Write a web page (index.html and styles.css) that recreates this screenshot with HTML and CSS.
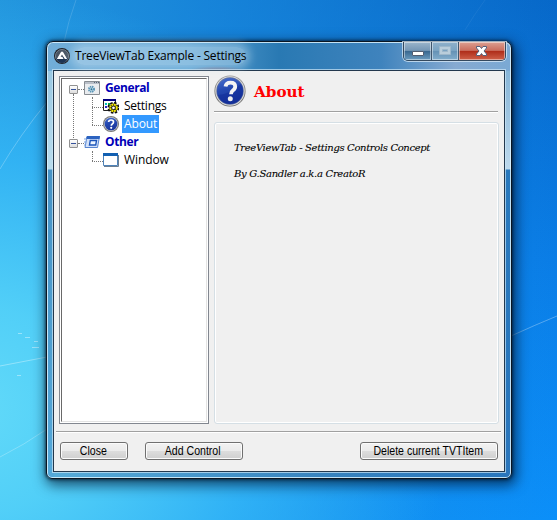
FILE: index.html
```html
<!DOCTYPE html>
<html lang="en">
<head>
<meta charset="utf-8">
<title>TreeViewTab Example - Settings</title>
<link rel="stylesheet" href="styles.css">
</head>
<body>
<svg class="rays" width="557" height="520" viewBox="0 0 557 520" fill="none" stroke="#fff">
  <path d="M76 0Q68 22 64 42" stroke-opacity=".15"/>
  <path d="M0 169Q20 135 47 102" stroke-opacity=".25"/>
  <path d="M0 366L47 357" stroke-opacity=".35"/>
  <path d="M0 457Q24 445 47 429" stroke-opacity=".25"/>
  <path d="M511 336Q535 325 557 316" stroke-opacity=".3"/>
  <path d="M465 30Q474 15 485 0" stroke-opacity=".06"/>
  <path d="M32 347.500h7M17 375.500h4M18 333.500h4M34 341.500h4M25 337.500h5" stroke-opacity=".4"/>
</svg>
<svg class="defs" width="0" height="0">
  <defs>
    <linearGradient id="blue" x1="0" y1="0" x2=".3" y2="1">
      <stop offset="0" stop-color="#4a70d0"/><stop offset=".5" stop-color="#2448b0"/><stop offset="1" stop-color="#1a379f"/>
    </linearGradient>
    <linearGradient id="ring" x1="0" y1="0" x2="0" y2="1">
      <stop offset="0" stop-color="#999"/><stop offset="1" stop-color="#666"/>
    </linearGradient>
    <symbol id="help" viewBox="0 0 32 32">
      <circle cx="16" cy="16" r="15.6" fill="url(#ring)"/>
      <circle cx="16" cy="16" r="14.7" fill="#dcdcdc"/>
      <circle cx="16" cy="16" r="13.7" fill="#60709d"/>
      <circle cx="16" cy="16" r="13" fill="url(#blue)"/>
      <path d="M4 20Q14 20 27 9A13 13 0 0 1 27 23A13 13 0 0 1 5 23Z" fill="#0b2391" opacity=".4"/>
      <path d="M11.500 11.500Q12 7.600 16.500 7.600Q21.200 7.600 21.200 11.600Q21.200 14 18.800 15.500Q17 16.800 17 19.200" fill="none" stroke="#f4f4f4" stroke-width="3.800"/>
      <circle cx="16.300" cy="23.800" r="2.500" fill="#eee"/>
    </symbol>
  </defs>
</svg>

<main class="window">
  <header class="titlebar">
    <svg class="app-icon" width="16" height="16" viewBox="0 0 16 16">
      <circle cx="8" cy="8" r="8" fill="#20242b"/>
      <circle cx="8" cy="8" r="6.600" fill="#4a5563" stroke="#8b97a3" stroke-width=".7"/>
      <path d="M2 10Q8 7 14 10Q12 15 8 15Q4 15 2 10Z" fill="#1d3351"/>
      <path d="M2.800 11L7 4.100Q8 3 9 4.100L13.200 11H10.800L8 6.400L6.600 8.800H8.300L9.600 11Z" fill="#fff"/>
    </svg>
    <span class="caption">TreeViewTab Example - Settings</span>
    <div class="controls">
      <span class="ctl min"><svg width="27" height="18" viewBox="0 0 27 18"><rect x="8.500" y="9.500" width="11" height="4" rx=".5" fill="#fff" stroke="#525d70"/></svg></span>
      <span class="ctl max"><svg width="26" height="18" viewBox="0 0 26 18"><path d="M7.500 4.500h11v8h-11zM10.500 7.500h5v2h-5z" fill="#b9cddb" fill-rule="evenodd" stroke="#9db7ca"/></svg></span>
      <span class="ctl close"><svg width="46" height="18" viewBox="0 0 46 18"><path d="M17.500 4.500h3.500l1.500 2l1.500-2h3.500v1.500l-2.500 3l2.500 3v1.500h-3.500l-1.500-2l-1.500 2h-3.500v-1.500l2.500-3l-2.500-3z" fill="#fff" stroke="#56607a"/></svg></span>
    </div>
  </header>

  <section class="client">
    <div class="panes">
      <div class="tree-frame">
        <ul class="tree">
          <li class="group first">
            <div class="row"><span class="toggle"></span><span class="stub"></span>
              <svg width="16" height="14" viewBox="0 0 16 14"><path d="M.5.5h15v13H.5z" fill="#e9ecef" stroke="#878c92"/><path d="M1 1h14v2H1z" fill="#b9bfc8"/><path d="M10 1.500h1M12 1.500h1M14 1.500h1" stroke="#56667a"/><circle cx="7.500" cy="8.200" r="2.500" fill="#c9e1ed" stroke="#5794b6" stroke-width="2" stroke-dasharray="1.300 .7"/><circle cx="7.500" cy="8.200" r="1" fill="#2d7196"/></svg>
              <span class="label general"><b>General</b></span></div>
            <ul>
              <li class="row"><span class="branch"></span>
                <svg width="16" height="16" viewBox="0 0 16 16"><path d="M.5 1.500h12v11H.5z" fill="#fff" stroke="#222"/><path d="M0 1h13v2H0z" fill="#000080"/><path d="M2 5h2v2H2z" fill="#0bb"/><path d="M2 8h2v2H2z" fill="#22c"/><path d="M5 5h2v2H5z" fill="#0a4"/><circle cx="10.500" cy="9.800" r="4.500" fill="none" stroke="#111" stroke-width="3" stroke-dasharray="2.200 1.330"/><circle cx="10.500" cy="9.800" r="2.900" fill="#fff" stroke="#111" stroke-width="3"/><circle cx="10.500" cy="9.800" r="3.300" fill="none" stroke="#f2e500" stroke-width="2" stroke-dasharray="2 .6"/></svg>
                <span class="label settings">Settings</span></li>
              <li class="row"><span class="branch"></span>
                <svg width="16" height="16" viewBox="0 0 16 16"><circle cx="8" cy="8" r="8" fill="#777"/><circle cx="8" cy="8" r="7" fill="#bfc3cc"/><circle cx="8" cy="8" r="6.300" fill="url(#blue)"/><path d="M5.600 6Q5.800 4 8.100 4Q10.500 4 10.500 6Q10.500 7.200 9.300 7.900Q8.300 8.500 8.300 9.700" fill="none" stroke="#fff" stroke-width="1.700"/><circle cx="8.200" cy="11.800" r="1.100" fill="#fff"/></svg>
                <span class="label about selected">About</span></li>
            </ul>
          </li>
          <li class="group">
            <div class="row"><span class="toggle"></span><span class="stub"></span>
              <svg width="16" height="12" viewBox="0 0 16 12"><path d="M3 .5h12.500l-2 11H1z" fill="#d3e2fa" stroke="#5784cf"/><path d="M3 0h13l-.6 3H2z" fill="#2c63c0"/><path d="M0 3h3M0 6h2M0 9h2" stroke="#78a1df"/><path d="M6.300 4.500h6.200l-.8 4.500H5.500z" fill="#eef6ff" stroke="#1c55ba" stroke-width="1.400"/></svg>
              <span class="label other"><b>Other</b></span></div>
            <ul>
              <li class="row"><span class="branch"></span>
                <svg width="16" height="14" viewBox="0 0 16 14"><path d="M1 13.500h14.500V2" fill="none" stroke="#6b7e92"/><path d="M.5 1h14v11.500H.5z" fill="#fff" stroke="#4e83b9"/><path d="M0 0h15v3H0z" fill="#1260b2"/></svg>
                <span class="label win">Window</span></li>
            </ul>
          </li>
        </ul>
      </div>
      <div class="page">
        <div class="page-head"><svg width="32" height="32"><use href="#help"/></svg><h1>About</h1></div>
        <div class="content">
          <p>TreeViewTab - Settings Controls Concept</p>
          <p class="author">By G.Sandler a.k.a CreatoR</p>
        </div>
      </div>
    </div>
    <footer class="actions">
      <button class="b-close"><span>Close</span></button>
      <button class="b-add"><span>Add Control</span></button>
      <button class="b-del"><span>Delete current TVTItem</span></button>
    </footer>
  </section>
</main>
</body>
</html>
```
FILE: styles.css
```css
* { box-sizing: border-box; }
body {
  margin: 0;
  width: 557px;
  height: 520px;
  overflow: hidden;
  padding: 41px 45px 41px 46px;
  font: 12px "Open Sans", "Noto Sans", sans-serif;
  color: #000;
  background:
    radial-gradient(ellipse 480px 420px at -30px 410px, #62daf9 0%, rgba(84,210,249,.95) 25%, rgba(55,188,250,.75) 60%, rgba(30,160,250,0) 100%),
    linear-gradient(90deg, rgba(36,152,222,.95), rgba(30,145,225,.65) 40%, rgba(10,110,220,0)),
    linear-gradient(#0768c9, #0a7de6 50%, #0b8ff9);
}
.rays { position: absolute; left: 0; top: 0; }
.defs { position: absolute; }
.window {
  position: relative;
  width: 466px;
  height: 438px;
  border: 1px solid #0b1622;
  border-radius: 7px 7px 6px 6px;
  padding: 0 6px;
  background:
    radial-gradient(ellipse 30px 5px at 170px 29px, rgba(170,60,60,.5), rgba(170,60,60,0)) 0 0 / 100% 29px no-repeat,
    linear-gradient(90deg, #72aed8 0, #5ba3d3 30%, #2979b3 50%, #3f83bd 72%, #86aad1 88%, #7aa9d4) 0 0 / 100% 29px no-repeat,
    linear-gradient(#76aad1 0, #bcd8ec 127px, #2979bd 128px, #2a75bb 100%) 100% 0 / 7px 100% no-repeat,
    linear-gradient(#8fc2e0 0, #b9dced 127px, #4793c6 128px, #54a8d9 100%) 0 0 / 7px 100% no-repeat,
    linear-gradient(90deg, #58add9, #3783bf 60%, #2876bd);
  box-shadow: inset 0 0 0 1px rgba(220,243,255,.85), 0 0 3px 1px rgba(0,15,30,.6), 2px 4px 13px 2px rgba(0,20,45,.7);
}
.titlebar { height: 28px; display: flex; align-items: flex-start; padding-left: 1px; }
.app-icon { margin-top: 6px; }
.caption {
  margin: 5px 0 0 5px;
  width: 171px;
  height: 18px;
  line-height: 18px;
  letter-spacing: -.2px;
  white-space: nowrap;
  border-radius: 9px;
  background: rgba(210,232,245,.42);
  box-shadow: 0 0 8px 4px rgba(210,232,245,.42);
}
.controls {
  margin: 0 -1px 0 auto;
  display: flex;
  height: 19px;
  border: 1px solid #34495e;
  border-top: 0;
  border-radius: 0 0 5px 5px;
  overflow: hidden;
  box-shadow: 0 0 0 1px rgba(225,240,250,.7);
}
.ctl { height: 18px; box-shadow: inset 0 0 0 1px rgba(255,255,255,.45); }
.ctl svg { display: block; }
.min, .max { border-right: 1px solid #40566d; }
.min { background: linear-gradient(#9bb5cb, #7597b5 47%, #37668e 50%, #6c9cc0); }
.max { background: linear-gradient(#8fb0ca, #7ba4c3 47%, #6591b4 50%, #83aecd); }
.close { background: linear-gradient(#dba092, #ca6d5d 47%, #ae2b18 50%, #cf614a); }
.client {
  height: 402px;
  border: 1px solid #23384d;
  outline: 1px solid rgba(205,231,247,.7);
  background: #f0f0f0;
  padding: 5px 3px 0 2px;
}
.panes { display: flex; height: 349px; padding-left: 3px; gap: 5px; }
.tree-frame { width: 150px; height: 348px; border: 1px solid #828790; padding: 1px; background: #fff; }
.tree {
  height: 344px;
  border: 1px solid #696969;
  border-right-color: #e3e3e3;
  border-bottom-color: #e3e3e3;
  padding: 0 0 0 7px;
}
ul { list-style: none; margin: 0; padding: 0; }
.group { position: relative; }
.group.first::before { content: ""; position: absolute; left: 4px; top: 15px; height: 44px; border-left: 1px dotted #777; }
.group > ul { position: relative; padding-left: 23px; }
.group > ul::before { content: ""; position: absolute; left: 23px; top: 0; bottom: 8px; border-left: 1px dotted #777; }
.row { height: 18px; display: flex; align-items: center; }
.toggle {
  width: 9px;
  height: 9px;
  margin-top: 2px;
  border: 1px solid #919191;
  border-radius: 1px;
  background: linear-gradient(#35519b, #35519b) center / 5px 1px no-repeat, linear-gradient(#fff, #ddd);
}
.stub { width: 6px; margin-top: 2px; border-top: 1px dotted #777; }
.branch { width: 11px; margin-top: 2px; border-top: 1px dotted #777; }
.label { margin-left: 3px; height: 18px; line-height: 17px; padding: 0 2px; white-space: nowrap; }
.label b { color: #0000b8; font-weight: 700; }
.general, .other { letter-spacing: -.4px; }
.settings { letter-spacing: -.25px; }
.win { letter-spacing: -.1px; }
.about { letter-spacing: -.1px; }
.selected { background: #3399ff; color: #fff; }
.page { width: 285px; }
.page-head { height: 36px; display: flex; align-items: center; border-bottom: 1px solid #a0a0a0; box-shadow: 0 1px #fff; padding-bottom: 6px; margin-right: 1px; }
h1 { margin: 0 0 0 8px; padding-top: 2px; font: bold 15.200px "DejaVu Serif", serif; color: #f00; }
.content {
  margin: 10px 0 0;
  height: 302px;
  border: 1px solid #d5dfe5;
  border-radius: 3px;
  box-shadow: inset 0 0 0 1px #fff;
  padding: 17px 19px;
}
.content p {
  margin: 0 0 10px;
  height: 16px;
  font: italic 10px/16px "DejaVu Serif", serif;
  letter-spacing: -.35px;
  -webkit-text-stroke: .1px #000;
  white-space: nowrap;
}
.content .author { letter-spacing: -.3px; }
.actions { display: flex; margin-top: 6px; border-top: 1px solid #a0a0a0; box-shadow: inset 0 1px #fff; padding: 10px 3px 0 4px; }
button {
  height: 18px;
  padding: 0;
  border: 1px solid #707070;
  border-radius: 3px;
  box-shadow: inset 0 0 0 1px #fbfbfb;
  background: linear-gradient(#f2f2f2, #ebebeb 49%, #ddd 50%, #cfcfcf);
  font: 12px/14px "Liberation Sans", sans-serif;
  color: #000;
  white-space: nowrap;
}
button span { display: inline-block; transform: translateX(-1px) scaleX(.88); }
.b-close { width: 68px; }
.b-add { width: 98px; margin-left: 17px; }
.b-del { width: 138px; margin-left: auto; }
```
